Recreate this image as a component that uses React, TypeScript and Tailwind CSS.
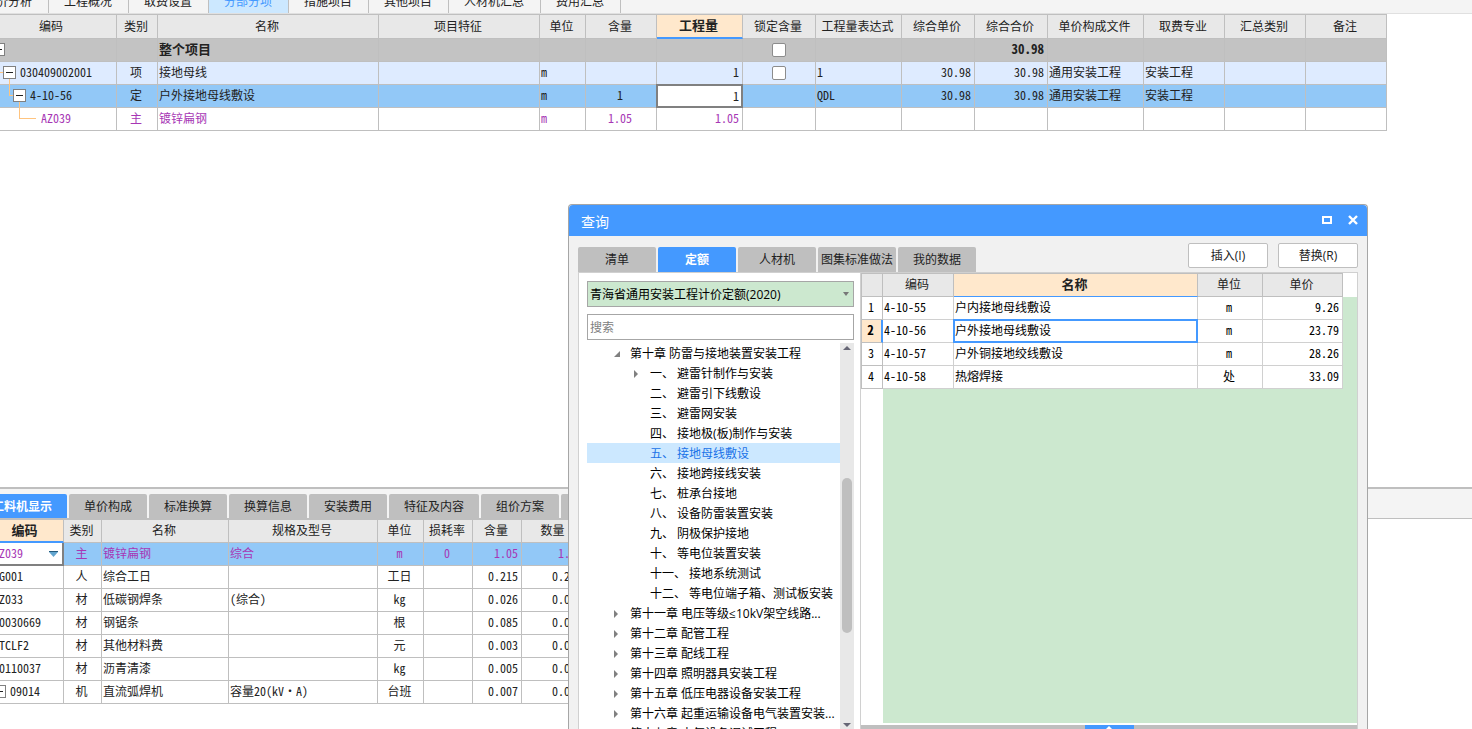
import { useState } from "react";
import type { ReactNode } from "react";
import clsx from "clsx";

interface ProjectRow {
  code: string;
  level: number;
  type: string;
  name: string;
  unit: string;
  content: string;
  quantity: string;
  lock: boolean;
  expression: string;
  unitPrice: string;
  totalPrice: string;
  file: string;
  major: string;
  className: string;
}

interface MaterialRow {
  code: string;
  type: string;
  name: string;
  spec: string;
  unit: string;
  loss: string;
  content: string;
  amount: string;
}

interface TreeItem {
  label: string;
  level: 1 | 2;
  state?: "open" | "closed";
}

const pageTabs = ["造价分析", "工程概况", "取费设置", "分部分项", "措施项目", "其他项目", "人材机汇总", "费用汇总"];

const projectColumns = [
  { title: "编码", width: "w-[129px]" },
  { title: "类别", width: "w-[41px]" },
  { title: "名称", width: "w-[221px]" },
  { title: "项目特征", width: "w-[161px]" },
  { title: "单位", width: "w-[46px]" },
  { title: "含量", width: "w-[71px]" },
  { title: "工程量", width: "w-[86px]" },
  { title: "锁定含量", width: "w-[73px]" },
  { title: "工程量表达式", width: "w-[86px]" },
  { title: "综合单价", width: "w-[73px]" },
  { title: "综合合价", width: "w-[73px]" },
  { title: "单价构成文件", width: "w-[96px]" },
  { title: "取费专业", width: "w-[81px]" },
  { title: "汇总类别", width: "w-[81px]" },
  { title: "备注", width: "w-[81px]" },
];

const projectRows: ProjectRow[] = [
  { code: "", level: 0, type: "", name: "整个项目", unit: "", content: "", quantity: "", lock: true, expression: "", unitPrice: "", totalPrice: "30.98", file: "", major: "", className: "bg-[#c3c3c3] text-[13px] font-bold" },
  { code: "030409002001", level: 1, type: "项", name: "接地母线", unit: "m", content: "", quantity: "1", lock: true, expression: "1", unitPrice: "30.98", totalPrice: "30.98", file: "通用安装工程", major: "安装工程", className: "bg-[#deebff]" },
  { code: "4-10-56", level: 2, type: "定", name: "户外接地母线敷设", unit: "m", content: "1", quantity: "1", lock: false, expression: "QDL", unitPrice: "30.98", totalPrice: "30.98", file: "通用安装工程", major: "安装工程", className: "bg-[#92c8f7]" },
  { code: "AZ039", level: 3, type: "主", name: "镀锌扁钢", unit: "m", content: "1.05", quantity: "1.05", lock: false, expression: "", unitPrice: "", totalPrice: "", file: "", major: "", className: "bg-white text-[#a737b5]" },
];

const detailTabs = ["工料机显示", "单价构成", "标准换算", "换算信息", "安装费用", "特征及内容", "组价方案", "工程量明细"];

const materialColumns = [
  { title: "编码", width: "w-[76px]" },
  { title: "类别", width: "w-[38px]" },
  { title: "名称", width: "w-[127px]" },
  { title: "规格及型号", width: "w-[149px]" },
  { title: "单位", width: "w-[46px]" },
  { title: "损耗率", width: "w-[49px]" },
  { title: "含量", width: "w-[49px]" },
  { title: "数量", width: "w-[64px]" },
];

const materialRows: MaterialRow[] = [
  { code: "AZ039", type: "主", name: "镀锌扁钢", spec: "综合", unit: "m", loss: "0", content: "1.05", amount: "1.05" },
  { code: "RG001", type: "人", name: "综合工日", spec: "", unit: "工日", loss: "", content: "0.215", amount: "0.215" },
  { code: "AZ033", type: "材", name: "低碳钢焊条", spec: "(综合)", unit: "kg", loss: "", content: "0.026", amount: "0.026" },
  { code: "C0030669", type: "材", name: "钢锯条", spec: "", unit: "根", loss: "", content: "0.085", amount: "0.085" },
  { code: "QTCLF2", type: "材", name: "其他材料费", spec: "", unit: "元", loss: "", content: "0.003", amount: "0.003" },
  { code: "C0110037", type: "材", name: "沥青清漆", spec: "", unit: "kg", loss: "", content: "0.005", amount: "0.005" },
  { code: "09014", type: "机", name: "直流弧焊机", spec: "容量20(kV·A)", unit: "台班", loss: "", content: "0.007", amount: "0.007" },
];

const queryTabs = ["清单", "定额", "人材机", "图集标准做法", "我的数据"];

const treeItems: TreeItem[] = [
  { label: "第十章 防雷与接地装置安装工程", level: 1, state: "open" },
  { label: "一、 避雷针制作与安装", level: 2, state: "closed" },
  { label: "二、 避雷引下线敷设", level: 2 },
  { label: "三、 避雷网安装", level: 2 },
  { label: "四、 接地极(板)制作与安装", level: 2 },
  { label: "五、 接地母线敷设", level: 2 },
  { label: "六、 接地跨接线安装", level: 2 },
  { label: "七、 桩承台接地", level: 2 },
  { label: "八、 设备防雷装置安装", level: 2 },
  { label: "九、 阴极保护接地", level: 2 },
  { label: "十、 等电位装置安装", level: 2 },
  { label: "十一、 接地系统测试", level: 2 },
  { label: "十二、 等电位端子箱、测试板安装", level: 2 },
  { label: "第十一章 电压等级≤10kV架空线路...", level: 1, state: "closed" },
  { label: "第十二章 配管工程", level: 1, state: "closed" },
  { label: "第十三章 配线工程", level: 1, state: "closed" },
  { label: "第十四章 照明器具安装工程", level: 1, state: "closed" },
  { label: "第十五章 低压电器设备安装工程", level: 1, state: "closed" },
  { label: "第十六章 起重运输设备电气装置安装...", level: 1, state: "closed" },
  { label: "第十七章 电气设备调试工程", level: 1, state: "closed" },
];

const quotaColumns = [
  { title: "", width: "w-[22px]" },
  { title: "编码", width: "w-[71px]" },
  { title: "名称", width: "w-[244px]" },
  { title: "单位", width: "w-[65px]" },
  { title: "单价", width: "w-[80px]" },
];

const quotaRows = [
  { code: "4-10-55", name: "户内接地母线敷设", unit: "m", price: "9.26" },
  { code: "4-10-56", name: "户外接地母线敷设", unit: "m", price: "23.79" },
  { code: "4-10-57", name: "户外铜接地绞线敷设", unit: "m", price: "28.26" },
  { code: "4-10-58", name: "热熔焊接", unit: "处", price: "33.09" },
];

// Minus box of a tree grid, its top left corner at (x, 4)
function MinusBox({ x }: { x: number }) {
  return (
    <>
      <rect x={x + 0.5} y="4.5" width="12" height="12" fill="#fff" stroke="#808080" />
      <path d={`M${x + 3} 10.5h7`} stroke="#222" />
    </>
  );
}

function TreeLines({ level }: { level: number }) {
  return (
    <svg
      className={clsx("shrink-0 overflow-visible", level < 2 ? "w-8" : level === 2 ? "w-[42px]" : "w-[53px]")}
      height="22"
      fill="none"
      shapeRendering="crispEdges"
      aria-hidden="true"
    >
      {level === 0 && <MinusBox x={4} />}
      {level === 1 && (
        <>
          <path d="M12 10.5H15" stroke="#ffc47f" />
          <MinusBox x={15} />
        </>
      )}
      {level === 2 && (
        <>
          <path d="M21.5 -6V10.5H25" stroke="#ffc47f" />
          <MinusBox x={25} />
        </>
      )}
      {level === 3 && <path d="M31.5 -6V10.5H48" stroke="#ffc47f" />}
    </svg>
  );
}

function Th({ children, active, className }: { children?: ReactNode; active?: boolean; className?: string }) {
  return (
    <th
      className={clsx(
        "border-r border-t border-[#bfbfbf] pb-0.5 pl-0 pr-0.5 pt-0 text-center leading-4",
        active ? "border-b-2 border-b-[#4499ff] bg-[#ffe8cc] text-[13px] font-bold" : "border-b bg-[#e8e8e8] font-normal",
        className
      )}
    >
      {children}
    </th>
  );
}

function Td({ children, className }: { children?: ReactNode; className?: string }) {
  return (
    <td
      className={clsx(
        "h-[23px] whitespace-nowrap border-b border-r border-[#bfbfbf] pb-0.5 pl-px pr-[3px] pt-0 leading-4",
        className
      )}
    >
      {children}
    </td>
  );
}

function ProjectTable() {
  const [quantity, setQuantity] = useState("1");

  return (
    <table className="-ml-3 w-[1399px] table-fixed border-separate border-spacing-0">
      <thead>
        <tr className="h-[25px]">
          {projectColumns.map((col) => (
            <Th key={col.title} active={col.title === "工程量"} className={col.width}>
              {col.title}
            </Th>
          ))}
        </tr>
      </thead>
      <tbody>
        {projectRows.map((row) => (
          <tr key={row.level} className={row.className}>
            <td className="h-[23px] border-b border-r border-[#bfbfbf] p-0">
              <div className="flex h-[22px] items-center">
                <TreeLines level={row.level} />
                <span className="pb-0.5">{row.code}</span>
              </div>
            </td>
            <Td className="text-center">{row.type}</Td>
            <Td>{row.name}</Td>
            <Td />
            <Td>{row.unit}</Td>
            <Td className="text-center">{row.content}</Td>
            {row.level === 2 ? (
              <td className="relative border-b border-r border-[#bfbfbf] p-0">
                <input
                  aria-label="工程量"
                  value={quantity}
                  onChange={(e) => setQuantity(e.target.value)}
                  className="absolute -left-px -top-px h-6 w-[87px] border-2 border-[#808080] bg-white pb-0.5 pr-0.5 text-right outline-none"
                />
              </td>
            ) : (
              <Td className="text-right">{row.quantity}</Td>
            )}
            <td className="border-b border-r border-[#bfbfbf] p-0">
              {row.lock && (
                <input
                  type="checkbox"
                  aria-label="锁定含量"
                  className="mx-auto block size-3.5 appearance-none rounded-xs border border-[#8c8c8c] bg-white checked:bg-[#4499ff]"
                />
              )}
            </td>
            <Td>{row.expression}</Td>
            <Td className="text-right">{row.unitPrice}</Td>
            <Td className="text-right">{row.totalPrice}</Td>
            <Td>{row.file}</Td>
            <Td>{row.major}</Td>
            <Td />
            <Td />
          </tr>
        ))}
      </tbody>
    </table>
  );
}

function MaterialTable() {
  return (
    <table className="-ml-3 w-[598px] table-fixed border-separate border-spacing-0">
      <thead>
        <tr className="h-6">
          {materialColumns.map((col, i) => (
            <Th key={col.title} active={i === 0} className={col.width}>
              {col.title}
            </Th>
          ))}
        </tr>
      </thead>
      <tbody>
        {materialRows.map((row, i) => (
          <tr key={row.code} className={i === 0 ? "bg-[#92c8f7] text-[#a737b5]" : "bg-white"}>
            {i === 0 ? (
              <td className="h-[23px] border-b-2 border-r-2 border-[#808080] bg-white p-0">
                <div className="flex items-center justify-between pl-[5px] pr-1">
                  <span className="pb-0.5">{row.code}</span>
                  <button type="button" aria-label="选择编码">
                    <svg width="9" height="6" viewBox="0 0 9 6" className="block" aria-hidden="true">
                      <path d="M0 1h9L4.5 6z" fill="#62a5cf" />
                      <path d="M0 .5h9" stroke="#235a7c" />
                    </svg>
                  </button>
                </div>
              </td>
            ) : (
              <td className="h-[23px] border-b border-r border-[#bfbfbf] p-0">
                <div className="flex h-[22px] items-center">
                  {row.code === "09014" ? (
                    <svg width="22" height="22" fill="none" shapeRendering="crispEdges" aria-hidden="true">
                      <MinusBox x={5} />
                    </svg>
                  ) : null}
                  <span className={clsx("pb-0.5", row.code !== "09014" && "pl-[5px]")}>{row.code}</span>
                </div>
              </td>
            )}
            <Td className="text-center">{row.type}</Td>
            <Td>{row.name}</Td>
            <Td>{row.spec}</Td>
            <Td className="text-center">{row.unit}</Td>
            <Td className="text-center">{row.loss}</Td>
            <Td className="text-right">{row.content}</Td>
            <Td className="text-right">{row.amount}</Td>
          </tr>
        ))}
      </tbody>
    </table>
  );
}

function ChapterTree() {
  const [selected, setSelected] = useState("五、 接地母线敷设");

  return (
    <div className="mt-[3px] flex min-h-0 flex-1">
      <ul className="min-w-0 flex-1 overflow-hidden">
        {treeItems.map((item) => (
          <li key={item.label}>
            <button
              type="button"
              onClick={() => setSelected(item.label)}
              className={clsx(
                "flex h-5 w-full items-center whitespace-nowrap pt-0.5 text-left",
                item.level === 1 ? "pl-[26px]" : "pl-[46px]",
                selected === item.label ? "bg-[#cce8ff] text-[#1a73e8]" : "text-black"
              )}
            >
              <span className="w-[17px] shrink-0">
                {item.state === "open" && (
                  <svg width="8" height="8" viewBox="0 0 8 8" aria-hidden="true">
                    <path d="M7 1v6H1z" fill="#808080" />
                  </svg>
                )}
                {item.state === "closed" && (
                  <svg width="8" height="8" viewBox="0 0 8 8" aria-hidden="true">
                    <path d="M1 0l4 4-4 4z" fill="#808080" />
                  </svg>
                )}
              </span>
              {item.label}
            </button>
          </li>
        ))}
      </ul>
      <div className="flex w-3.5 flex-col items-center bg-[#e8e8e8]">
        <svg width="10" height="10" viewBox="0 0 10 10" aria-hidden="true">
          <path d="M1 7l4-4 4 4z" fill="#666675" />
        </svg>
        <div className="mt-[125px] h-[155px] w-2.5 rounded-full bg-[#bfbfbf]" />
        <svg className="mt-auto" width="10" height="8" viewBox="0 0 10 8" aria-hidden="true">
          <path d="M1 2l4 4 4-4z" fill="#666675" />
        </svg>
      </div>
    </div>
  );
}

function QuotaTable() {
  return (
    <table className="w-[482px] table-fixed border-separate border-spacing-0 font-['Noto_Sans_Mono_CJK_SC','Noto_Sans_CJK_SC',monospace]">
      <thead>
        <tr className="h-6">
          {quotaColumns.map((col, i) => (
            <th
              key={i}
              className={clsx(
                "border-b border-r border-t border-[#bfbfbf] pb-0.5 pl-0 pr-0.5 pt-0 text-center leading-4",
                col.width,
                i === 0 && "border-l",
                i === 2 ? "border-b-[#4499ff] bg-[#ffe8cc] text-[13px] font-bold" : "bg-[#e8e8e8] font-normal"
              )}
            >
              {col.title}
            </th>
          ))}
        </tr>
      </thead>
      <tbody>
        {quotaRows.map((row, i) => {
          const active = i === 1;
          return (
            <tr key={row.code} className="bg-white text-black">
              <Td
                className={clsx(
                  "border-l text-center",
                  active && "border-r-2 border-r-[#4499ff] bg-[#ffe8cc] text-[13px] font-bold"
                )}
              >
                {i + 1}
              </Td>
              <Td className="border-[#d0d0d0]">{row.code}</Td>
              <Td className="relative border-[#d0d0d0]">
                {row.name}
                {active && <span className="absolute -bottom-px -left-px -right-px -top-px border-2 border-[#4499ff]" />}
              </Td>
              <Td className="border-[#d0d0d0] text-center">{row.unit}</Td>
              <Td className="border-[#d0d0d0] text-right">{row.price}</Td>
            </tr>
          );
        })}
      </tbody>
    </table>
  );
}

function QueryDialog() {
  const [tab, setTab] = useState("定额");

  return (
    <div
      role="dialog"
      aria-label="查询"
      className="absolute bottom-0 left-[568px] top-[204px] z-20 flex w-[800px] flex-col rounded-t border-x border-t border-[#a6a6a6] bg-[#f1f1f1] font-['Open_Sans','Noto_Sans_CJK_SC',sans-serif]"
    >
      <div className="flex h-[31px] shrink-0 items-center justify-between rounded-t bg-[#4499ff] pl-3 pr-2 text-white">
        <h2 className="pt-0.5 text-sm">查询</h2>
        <div className="flex gap-3.5 pb-0.5">
          <button type="button" aria-label="最大化">
            <svg width="12" height="10" viewBox="0 0 12 10" fill="none" className="block" aria-hidden="true">
              <path d="M2 2h8v6H2z" stroke="#fff" strokeWidth="2" />
            </svg>
          </button>
          <button type="button" aria-label="关闭">
            <svg width="12" height="10" viewBox="0 0 12 10" fill="none" className="block" aria-hidden="true">
              <path d="M2 1l8 8M10 1L2 9" stroke="#fff" strokeWidth="2.4" />
            </svg>
          </button>
        </div>
      </div>

      <div className="flex h-9 shrink-0 items-end justify-between px-[9px]">
        <div className="flex gap-0.5">
          {queryTabs.map((name) => (
            <button
              key={name}
              type="button"
              onClick={() => setTab(name)}
              className={clsx(
                "h-[25px] w-[78px] whitespace-nowrap rounded-t-xs",
                tab === name ? "bg-[#4499ff] font-bold text-white" : "bg-[#bfbfbf] text-[#222]"
              )}
            >
              {name}
            </button>
          ))}
        </div>
        <div className="mb-1 flex gap-2.5">
          <button type="button" className="h-[25px] w-20 rounded-xs border border-[#bfbfbf] bg-white">
            插入(I)
          </button>
          <button type="button" className="h-[25px] w-20 rounded-xs border border-[#bfbfbf] bg-white">
            替换(R)
          </button>
        </div>
      </div>

      <div className="mx-[9px] flex min-h-0 flex-1 border-x border-t border-[#d0d0d0] bg-white">
        <div className="flex w-[282px] shrink-0 flex-col border-r border-[#d0d0d0] pl-2 pr-1.5 pt-2">
          <div className="relative">
            <select
              aria-label="定额库"
              className="block h-[26px] w-full appearance-none border border-[#a6a6a6] bg-[#cce8cf] px-0.5 pt-0.5 text-black outline-none"
            >
              <option>青海省通用安装工程计价定额(2020)</option>
            </select>
            <svg className="pointer-events-none absolute right-[5px] top-[11px]" width="6" height="4" viewBox="0 0 6 4" aria-hidden="true">
              <path d="M0 0h6L3 4z" fill="#777" />
            </svg>
          </div>
          <input
            aria-label="搜索"
            placeholder="搜索"
            className="mt-[7px] h-[26px] w-full shrink-0 border border-[#a6a6a6] bg-white px-0.5 outline-none placeholder:text-[#808080]"
          />
          <ChapterTree />
        </div>

        <div className="flex min-w-0 flex-1 flex-col">
          <div className="flex">
            <QuotaTable />
            <div className="flex-1 pt-6">
              <div className="h-full bg-[#cce8cf]" />
            </div>
          </div>
          <div className="mb-0.5 ml-[22px] flex-1 bg-[#cce8cf]" />
          <div className="flex h-1 justify-center bg-[#bfbfbf]">
            <button type="button" aria-label="展开" className="flex w-[49px] items-end justify-center bg-[#4499ff]">
              <svg width="6" height="3" viewBox="0 0 6 3" aria-hidden="true">
                <path d="M0 3l3-3 3 3z" fill="#fff" />
              </svg>
            </button>
          </div>
        </div>
      </div>
    </div>
  );
}

export default function App() {
  const [pageTab, setPageTab] = useState("分部分项");
  const [detailTab, setDetailTab] = useState("工料机显示");

  return (
    <main className="relative flex h-screen flex-col overflow-hidden bg-white font-['Noto_Sans_Mono_CJK_SC','Noto_Sans_CJK_SC',monospace] text-xs text-[#222]">
      <nav className="flex h-3.5 shrink-0 items-end overflow-hidden border-b border-[#e0e0e0] bg-[#f4f4f4] font-['Open_Sans','Noto_Sans_CJK_SC',sans-serif]">
        {pageTabs.map((name) => (
          <button
            key={name}
            type="button"
            onClick={() => setPageTab(name)}
            className={clsx(
              "h-[22px] shrink-0 whitespace-nowrap border-r border-[#bfbfbf] pl-[15px] pr-4 first:-ml-[31px]",
              pageTab === name && "bg-[#cce8ff] text-[#4499ff]"
            )}
          >
            {name}
          </button>
        ))}
      </nav>

      <section className="min-h-0 flex-1 overflow-hidden">
        <ProjectTable />
      </section>

      <section className="flex h-[242px] shrink-0 flex-col overflow-hidden border-t-2 border-[#bfbfbf]">
        <div className="flex h-[30px] shrink-0 items-end gap-0.5 border-b border-[#bfbfbf] bg-[#f4f4f4] font-['Open_Sans','Noto_Sans_CJK_SC',sans-serif]">
          {detailTabs.map((name) => (
            <button
              key={name}
              type="button"
              onClick={() => setDetailTab(name)}
              className={clsx(
                "h-6 shrink-0 whitespace-nowrap rounded-t-xs px-[15px] pt-px first:-ml-[23px]",
                detailTab === name ? "bg-[#4499ff] font-bold text-white" : "bg-[#bfbfbf] text-[#222]"
              )}
            >
              {name}
            </button>
          ))}
        </div>
        <MaterialTable />
      </section>

      <QueryDialog />
    </main>
  );
}
